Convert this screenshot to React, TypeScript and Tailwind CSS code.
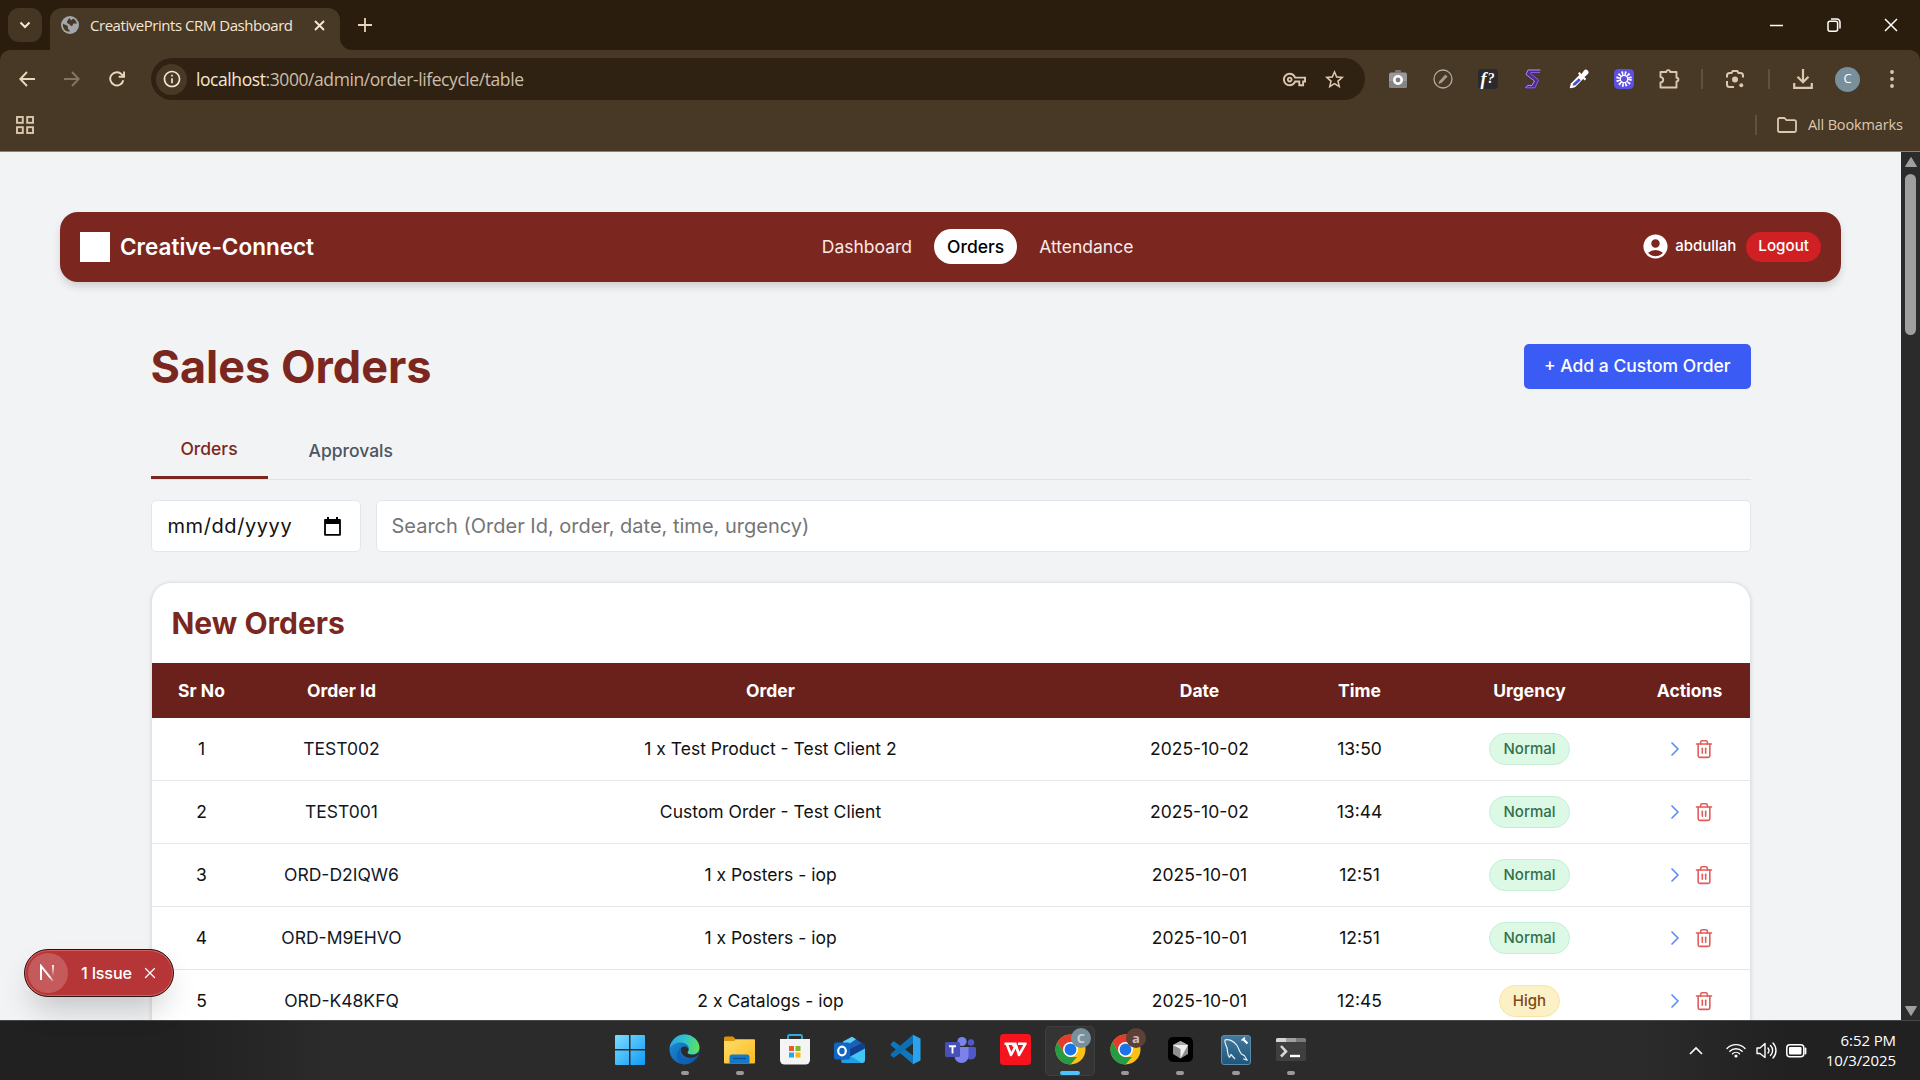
import React from "react";
import { X, Trash2, ChevronRight } from "lucide-react";
import { MdAccountCircle, MdOutlineVpnKey, MdStarOutline, MdOutlineInfo } from "react-icons/md";

type Order = { no: number; id: string; order: string; date: string; time: string; urgency: "Normal" | "High" };

const orders: Order[] = [
  { no: 1, id: "TEST002", order: "1 x Test Product - Test Client 2", date: "2025-10-02", time: "13:50", urgency: "Normal" },
  { no: 2, id: "TEST001", order: "Custom Order - Test Client", date: "2025-10-02", time: "13:44", urgency: "Normal" },
  { no: 3, id: "ORD-D2IQW6", order: "1 x Posters - iop", date: "2025-10-01", time: "12:51", urgency: "Normal" },
  { no: 4, id: "ORD-M9EHVO", order: "1 x Posters - iop", date: "2025-10-01", time: "12:51", urgency: "Normal" },
  { no: 5, id: "ORD-K48KFQ", order: "2 x Catalogs - iop", date: "2025-10-01", time: "12:45", urgency: "High" },
];

const columns = "grid grid-cols-[100px_180px_1fr_180px_140px_200px_120px] items-center text-center";

function Cell({ className, children }: { className: string; children?: React.ReactNode }) {
  return <div className={`flex shrink-0 items-center justify-center ${className}`}>{children}</div>;
}

/* ---------- browser chrome ---------- */

function TabStrip() {
  return (
    <div className="flex h-[50px] bg-[#2b1d0e]">
      <div className="ml-2 mt-2 flex h-[34px] w-[34px] items-center justify-center rounded-[11px] bg-[#453523]">
        <svg width="12" height="8" viewBox="0 0 12 8" fill="none" stroke="#f6e6d2" strokeWidth="2">
          <path d="M1.5 1.5 6 6l4.500-4.500" />
        </svg>
      </div>
      <div className="ml-2 mt-2 flex h-[42px] w-[290px] items-center rounded-t-[12px] bg-[#483826] pb-[8px] pl-[11px]">
        <svg width="18" height="18" viewBox="0 0 18 18">
          <circle cx="9" cy="9" r="9" fill="#a3a7ac" />
          <path d="M2.200 7.500c1.500 1.800 3.200 1 4.300 2.300 1 1.300-.2 2 .6 3.200.6.900 1.700.8 1.700 2.600-3.700.2-6.700-2.600-6.900-6.200 0-.7.100-1.300.3-1.900ZM8 2.200c1.300 0 1 1.600 2.200 1.700 1.200 0 1-1.200 2.200-1.100 1.800.9 3 2.700 3.400 4.700-1.300.5-2.200-.5-3.200.1-1 .700-.3 1.700-1.400 2.200-1.600.7-2-1.200-3.300-1.900C6.600 7.100 5.800 7 6 5.500 6.200 4.300 7.200 4.600 7.400 3.600c.1-.6.100-1 .6-1.400Z" fill="#483826" />
        </svg>
        <span className="ml-[11px] w-[207px] shrink-0 whitespace-nowrap pt-[1px] text-[15px] tracking-[-0.46px] text-[#f6e6d2]">CreativePrints CRM Dashboard</span>
        <svg className="ml-[17px]" width="11" height="11" viewBox="0 0 11 11" stroke="#f6e6d2" strokeWidth="1.900">
          <path d="m1 1 9 9M10 1l-9 9" />
        </svg>
      </div>
      <svg className="mt-[38px]" width="12" height="12" viewBox="0 0 12 12">
        <path d="M0 0a12 12 0 0 0 12 12H0Z" fill="#483826" />
      </svg>
      <svg className="ml-[6px] mt-[18px]" width="14" height="14" viewBox="0 0 14 14" stroke="#e8d5bc" strokeWidth="1.800">
        <path d="M7 0v14M0 7h14" />
      </svg>
      <div className="ml-auto flex h-[50px] items-center pr-[22px]">
        <svg width="13" height="13" viewBox="0 0 13 13" stroke="#fff" strokeWidth="1.500">
          <path d="M0 6.500h13" />
        </svg>
        <svg className="ml-[44px]" width="14" height="14" viewBox="0 0 14 14" fill="none" stroke="#fff" strokeWidth="1.500">
          <rect x="1" y="3.200" width="9.600" height="10" rx="2" />
          <path d="M4 1h5.500A3.600 3.600 0 0 1 13 4.600V10.500" />
        </svg>
        <svg className="ml-[43px]" width="14" height="14" viewBox="0 0 14 14" stroke="#fff" strokeWidth="1.500">
          <path d="m1 1 12 12M13 1 1 13" />
        </svg>
      </div>
    </div>
  );
}

function Extensions() {
  return (
    <>
      <Cell className="w-[45px]">
        <svg width="20" height="20" viewBox="0 0 20 20">
          <path d="M6.500 3.500 7.500 1h5l1 2.500Z" fill="#777" />
          <rect x="1" y="3.500" width="18" height="15.500" rx="2" fill="#999" />
          <path d="M1 12h18v5a2 2 0 0 1-2 2H3a2 2 0 0 1-2-2Z" fill="#858585" />
          <circle cx="10" cy="11" r="5" fill="#fff" />
          <circle cx="10" cy="11" r="2.400" fill="#7d7d7d" />
        </svg>
      </Cell>
      <Cell className="w-[45px]">
        <svg width="20" height="20" viewBox="0 0 20 20" fill="none">
          <circle cx="10" cy="10" r="9" stroke="#b3aa9f" strokeWidth="1.300" />
          <path d="m7 13.500 6.500-7" stroke="#a29a8f" strokeWidth="3" />
          <path d="m5.800 14.500 1.300-1.200" stroke="#b3aa9f" strokeWidth="1.200" />
        </svg>
      </Cell>
      <Cell className="w-[45px]">
        <div className="flex h-5 w-5 items-center justify-center rounded-[4px] bg-[#2a2a2c] font-['Liberation_Serif',serif] text-[18px] font-bold italic leading-none text-white">
          f<span className="ml-[1px] text-[14px]">?</span>
        </div>
      </Cell>
      <Cell className="w-[46px]">
        <svg width="18" height="20" viewBox="0 0 18 20" fill="none">
          <path d="M15.500 2.200H5.500L4.200 4.800 12.500 11 9.500 17.500H2" stroke="#4f2a94" strokeWidth="4.200" />
          <path d="M16.500 1H4L2 5.500 10.500 12 8 16.500H3.500L1.500 19" stroke="#b79af0" strokeWidth=".9" />
          <path d="M16 3.500H7L6.500 4.500 14.500 11 11 18.800H2" stroke="#8f66dd" strokeWidth=".9" />
        </svg>
      </Cell>
      <Cell className="w-[45px]">
        <svg width="20" height="20" viewBox="0 0 20 20">
          <path d="M10.800 5.600 14.700 9.500 6 18.200 1.500 19.200.8 18.500 1.900 14.400Z" fill="#fff" />
          <path d="M9.800 9.200 11.800 11.200 6.500 16.200 3.500 16.800 4.200 14.600Z" fill="#4453c8" />
          <path d="M9 4.500 10.500 3l2 2L15 1.500a2.600 2.600 0 0 1 3.700 3.700L15.500 8l1.700 2-1.500 1.400Z" fill="#fff" />
        </svg>
      </Cell>
      <Cell className="w-[45px]">
        <svg width="20" height="20" viewBox="0 0 20 20">
          <rect width="20" height="20" rx="4.500" fill="#5d50e0" />
          <circle cx="10" cy="10" r="5.500" fill="none" stroke="#fff" strokeWidth="4.500" strokeDasharray="1.500 1.380" />
          <circle cx="10" cy="10" r="3.700" fill="none" stroke="#fff" strokeWidth="1.200" />
        </svg>
      </Cell>
      <Cell className="w-[45px]">
        <svg width="22" height="22" viewBox="0 0 22 22" fill="none" stroke="#dcc8ae" strokeWidth="1.900" strokeLinejoin="round">
          <path d="M2.500 4H8.300a1.900 1.900 0 0 1 3.800 0H18.500V9.700a1.900 1.900 0 0 1 0 3.800V19.500H2.500V14.500a2.700 2.700 0 0 0 0-5.400Z" />
        </svg>
      </Cell>
      <Cell className="w-[21px]"><div className="h-5 w-[2px] bg-[#64513b]" /></Cell>
      <Cell className="w-[46px]">
        <svg width="20" height="20" viewBox="0 0 20 20" fill="none" stroke="#dcc8ae" strokeWidth="2">
          <path d="M2 8.500V6.500A2.500 2.500 0 0 1 4.500 4H6.500l1.200-2h4.600l1.200 2h2A2.500 2.500 0 0 1 18 6.500v2M2 12v3.500A2.500 2.500 0 0 0 4.500 18H9" />
          <circle cx="10" cy="10.500" r="3" fill="#dcc8ae" stroke="none" />
          <circle cx="16.300" cy="16.300" r="2" fill="#dcc8ae" stroke="none" />
        </svg>
      </Cell>
      <Cell className="w-[22px]"><div className="h-5 w-[2px] bg-[#64513b]" /></Cell>
      <Cell className="w-[46px]">
        <svg width="20" height="20" viewBox="0 0 20 20" fill="none" stroke="#dcc8ae" strokeWidth="2.200">
          <path d="M10 0v13M4.500 7.800 10 13.200l5.500-5.400M1.200 14v4.800h17.600V14" />
        </svg>
      </Cell>
      <Cell className="w-[43px]">
        <div className="flex h-[25px] w-[25px] items-center justify-center rounded-full bg-[#78909c] text-[13px] text-white">C</div>
      </Cell>
      <Cell className="w-[46px]">
        <svg width="4" height="18" viewBox="0 0 4 18" fill="#dcc8ae">
          <circle cx="2" cy="2" r="1.900" />
          <circle cx="2" cy="9" r="1.900" />
          <circle cx="2" cy="16" r="1.900" />
        </svg>
      </Cell>
    </>
  );
}

function Toolbar() {
  return (
    <div className="bg-[#2b1d0e]">
      <div className="h-[102px] rounded-t-[10px] border-b border-[#8c8175] bg-[#483826]">
        <div className="flex h-[58px] items-center pr-[4px]">
          <Cell className="ml-[4px] w-[46px]">
            <svg width="16" height="16" viewBox="0 0 16 16" fill="none" stroke="#ead6bb" strokeWidth="1.900"><path d="M16 8H1.500M8 1 1.300 8 8 15" /></svg>
          </Cell>
          <Cell className="w-[44px]">
            <svg width="16" height="16" viewBox="0 0 16 16" fill="none" stroke="#857560" strokeWidth="1.900"><path d="M0 8h14.500M8 1l6.700 7L8 15" /></svg>
          </Cell>
          <Cell className="w-[46px]">
            <svg width="16" height="16" viewBox="0 0 16 16" fill="none" stroke="#ead6bb" strokeWidth="1.900"><path d="M14.300 9.200A6.600 6.600 0 1 1 12.700 3.400L15 5.700M15.100 .5v5.300H9.700" /></svg>
          </Cell>
          <div className="ml-[11px] flex h-[42px] w-[1214px] items-center rounded-full bg-[#2f2213] pl-[5px]">
            <div className="flex h-[31px] w-[31px] items-center justify-center rounded-full bg-[#483826]">
              <MdOutlineInfo size={20} color="#f6e6d2" />
            </div>
            <span className="ml-[9px] whitespace-nowrap text-[17.500px] tracking-[-0.42px] text-[#cdbda9]">
              <span className="text-[#f6e6d2]">localhost</span>:3000/admin/order-lifecycle/table
            </span>
            <MdOutlineVpnKey className="ml-auto" size={23} color="#dcc8ae" />
            <MdStarOutline className="ml-[17px] mr-[19px]" size={23} color="#dcc8ae" />
          </div>
          <div className="w-[10px]" />
          <Extensions />
        </div>
        <div className="flex h-[34px] items-center pr-[18px]">
          <svg className="ml-[16px]" width="18" height="18" viewBox="0 0 18 18" fill="none" stroke="#dcc8ae" strokeWidth="1.900">
            <rect x="1" y="1" width="5.800" height="5.800" />
            <rect x="11.200" y="1" width="5.800" height="5.800" />
            <rect x="1" y="11.200" width="5.800" height="5.800" />
            <rect x="11.200" y="11.200" width="5.800" height="5.800" />
          </svg>
          <div className="ml-auto h-5 w-[2px] bg-[#64513b]" />
          <svg className="ml-[20px]" width="20" height="16" viewBox="0 0 20 16" fill="none" stroke="#dcc8ae" strokeWidth="1.800" strokeLinejoin="round">
            <path d="M1 2.500A1.500 1.500 0 0 1 2.500 1H7.500l2 2.200h8A1.500 1.500 0 0 1 19 4.700v8.800a1.500 1.500 0 0 1-1.500 1.500h-15A1.500 1.500 0 0 1 1 13.500Z" />
          </svg>
          <span className="ml-[11px] w-[94px] whitespace-nowrap text-[14.500px] tracking-[-0.15px] text-[#dcc8ae]">All Bookmarks</span>
        </div>
      </div>
    </div>
  );
}

/* ---------- web page ---------- */

function NavBar() {
  return (
    <nav className="mx-[60px] mt-[59.500px] flex h-[70px] items-center justify-between rounded-[18px] bg-[#7b2720] px-[20px] text-white shadow-[0_5px_8px_-1px_rgba(0,0,0,0.16)]">
      <div className="flex items-center">
        <div className="h-[30px] w-[30px] bg-white" />
        <span className="ml-[10px] text-[22.500px] font-semibold">Creative-Connect</span>
      </div>
      <div className="flex items-center text-[17.500px] text-[#fbe9e7]">
        <span className="pt-[1px]">Dashboard</span>
        <span className="mx-[22px] flex h-[35px] items-center rounded-full bg-white px-[13px] pt-[1px] font-medium text-black">Orders</span>
        <span className="pt-[1px]">Attendance</span>
      </div>
      <div className="flex items-center justify-end">
        <MdAccountCircle size={29} />
        <span className="ml-[5px] text-[15px] font-medium">abdullah</span>
        <span className="ml-[10px] flex h-[30px] items-center rounded-full bg-[#d12023] px-[12px] text-[15.200px] font-medium">Logout</span>
      </div>
    </nav>
  );
}

function Filters() {
  return (
    <div className="mt-[20px] flex gap-[15px] text-[20px]">
      <div className="flex h-[52px] w-[210px] items-center justify-between rounded-[5px] border border-[#e3e6ea] bg-white pl-[16px] pr-[19px]">
        <span className="tracking-[0.58px] text-[#111]">mm/dd/yyyy</span>
        <svg width="17" height="19" viewBox="0 0 17 19">
          <path d="M1 3h15v14.800H1Z" fill="none" stroke="#000" strokeWidth="1.800" strokeLinejoin="round" />
          <path d="M1 2.500h15V7H1ZM3 0h2v3H3ZM12 0h2v3h-2Z" fill="#000" />
        </svg>
      </div>
      <div className="flex h-[52px] flex-1 items-center rounded-[5px] border border-[#e3e6ea] bg-white pl-[15px] text-[#757575]">
        Search (Order Id, order, date, time, urgency)
      </div>
    </div>
  );
}

function OrdersTable() {
  return (
    <div className="mt-[30px] h-[600px] overflow-hidden rounded-t-[20px] border border-[#e0e3e8] bg-white shadow-[0_1px_4px_rgba(0,0,0,0.12)]">
      <h2 className="flex h-[80px] items-center pl-[20px] text-[30px] font-bold text-[#7b2720]">New Orders</h2>
      <div className={`${columns} h-[55px] bg-[#6b211b] pt-[2px] text-[17.500px] font-bold text-white`}>
        <span>Sr No</span>
        <span>Order Id</span>
        <span>Order</span>
        <span>Date</span>
        <span>Time</span>
        <span>Urgency</span>
        <span>Actions</span>
      </div>
      {orders.map((o) => (
        <div key={o.no} className={`${columns} h-[63px] border-b border-[#e5e7eb] text-[17.500px] text-[#111]`}>
          <span className="pt-[1px]">{o.no}</span>
          <span className="pt-[1px] text-[#101828]">{o.id}</span>
          <span className="pt-[1px]">{o.order}</span>
          <span className="pt-[1px]">{o.date}</span>
          <span className="pt-[1px]">{o.time}</span>
          <span className="flex justify-center">
            <span
              className={`flex h-[32px] items-center rounded-full border px-[13px] text-[15px] font-medium ${
                o.urgency === "Normal" ? "border-[#c6efd6] bg-[#dcf9e6] text-[#33704b]" : "border-[#f8e5a6] bg-[#fcf1c6] text-[#7f4a17]"
              }`}
            >
              {o.urgency}
            </span>
          </span>
          <span className="flex items-center justify-center pr-[3px]">
            <ChevronRight size={24} strokeWidth={1.700} color="#5f8df5" />
            <Trash2 className="ml-[7px]" size={20} strokeWidth={1.900} color="#e25b5b" />
          </span>
        </div>
      ))}
    </div>
  );
}

function IssueBadge() {
  return (
    <div className="absolute left-[24px] top-[949px] flex h-[48px] w-[150px] items-center rounded-full border border-[#2c1210] bg-[#b63637] pl-[3px] text-white shadow-[inset_0_0_0_1px_#d2605f,0_16px_32px_-8px_rgba(0,0,0,0.24)]">
      <div className="flex h-[40px] w-[40px] items-center justify-center rounded-full bg-[#c45a5b] pr-[1px]">
        <svg width="17" height="18" viewBox="0 0 17 18" fill="none">
          <defs>
            <linearGradient id="nStem" x1="0" y1="0" x2="0" y2="1">
              <stop offset="0" stopColor="#fff" />
              <stop offset="1" stopColor="#fff" stopOpacity="0" />
            </linearGradient>
            <linearGradient id="nDiag" x1="0" y1="0" x2="1" y2="1">
              <stop offset=".7" stopColor="#fff" />
              <stop offset="1" stopColor="#fff" stopOpacity=".2" />
            </linearGradient>
          </defs>
          <path d="M2 16V2L14 17" stroke="url(#nDiag)" strokeWidth="2" />
          <rect x="13" y="1" width="1.900" height="11" fill="url(#nStem)" />
        </svg>
      </div>
      <span className="ml-[13px] text-[16.200px] font-medium tracking-[-0.2px]">1 Issue</span>
      <X className="ml-[9px]" size={18} strokeWidth={1.700} />
    </div>
  );
}

function Scrollbar() {
  return (
    <div className="flex w-[19px] shrink-0 flex-col items-center bg-[#2b2b2b]">
      <svg className="mt-[5px]" width="12" height="10" viewBox="0 0 12 10"><path d="M6 .5 11.500 9.500H.5Z" fill="#9f9f9f" stroke="#9f9f9f" strokeLinejoin="round" /></svg>
      <div className="mt-[7px] h-[161px] w-[11px] rounded-full bg-[#9f9f9f]" />
      <svg className="mb-[4px] mt-auto" width="12" height="10" viewBox="0 0 12 10"><path d="M6 9.500 11.500.5H.5Z" fill="#9f9f9f" stroke="#9f9f9f" strokeLinejoin="round" /></svg>
    </div>
  );
}

/* ---------- taskbar ---------- */

function WindowsIcon() {
  return (
    <svg width="30" height="30" viewBox="0 0 30 30">
      <defs>
        <linearGradient id="win" x1="0" y1="0" x2="1" y2="1" gradientUnits="objectBoundingBox">
          <stop offset="0" stopColor="#7fdcff" />
          <stop offset="1" stopColor="#0f9bf5" />
        </linearGradient>
      </defs>
      <path d="M1 0H14V14H0V1A1 1 0 0 1 1 0ZM15.500 0H29a1 1 0 0 1 1 1V14H15.500ZM0 15.500H14V30H1a1 1 0 0 1-1-1ZM15.500 15.500H30V29a1 1 0 0 1-1 1H15.500Z" fill="url(#win)" />
    </svg>
  );
}

function EdgeIcon() {
  return (
    <svg width="31" height="31" viewBox="0 0 31 31">
      <defs>
        <linearGradient id="edgeTop" x1="0" y1=".3" x2="1" y2=".5">
          <stop offset="0" stopColor="#2aa5e0" />
          <stop offset=".5" stopColor="#2fc7c9" />
          <stop offset="1" stopColor="#5fe05a" />
        </linearGradient>
        <linearGradient id="edgeBody" x1="0" y1="0" x2="1" y2="1">
          <stop offset="0" stopColor="#1f94dd" />
          <stop offset="1" stopColor="#0c4da0" />
        </linearGradient>
      </defs>
      <circle cx="15.500" cy="15.500" r="15" fill="url(#edgeBody)" />
      <path d="M.7 14C2 6 8 .5 15.500.5 24 .5 30.500 7 30.500 13.500c0 4.500-3.500 7-7.500 7-3.500 0-5-1.200-4.500-2.300.5-1 1.300-1.600 1.300-3.700 0-3.500-4-6-8.300-6C6.500 8.500 2.500 11 .7 14Z" fill="url(#edgeTop)" />
      <path d="M11.500 14.500c-2 6 3 13.500 12 13a15 15 0 0 1-10 2.800C7 28 6.500 17.500 11.500 14.500Z" fill="#0f62b5" />
      <path d="M12 14.300c1-1.400 3-2.300 5-1.500 1.900.8 2.600 2 2.500 3.300-.1 1-1 1.600-1.100 2.400 0 1.200 1.600 2.300 4.600 2.300 2.300 0 4.200-.6 7.500-2.300-1.300 3.700-6 5.500-10 5.200-5.200-.3-9.700-4.200-8.500-9.400Z" fill="#2b2b2b" />
    </svg>
  );
}

function ExplorerIcon() {
  return (
    <svg width="31" height="28" viewBox="0 0 31 28">
      <defs>
        <linearGradient id="folder" x1="0" y1="0" x2="1" y2="1">
          <stop offset="0" stopColor="#ffdc6b" />
          <stop offset="1" stopColor="#fbbc1e" />
        </linearGradient>
      </defs>
      <path d="M0 2a1.500 1.500 0 0 1 1.500-1.500H9L12 3.500V8H0Z" fill="#d9940c" />
      <path d="M0 5h10l2-1.800h18a1 1 0 0 1 1 1V26.500a1 1 0 0 1-1 1H1a1 1 0 0 1-1-1Z" fill="url(#folder)" />
      <path d="M5.500 27.500V21a2.500 2.500 0 0 1 2.500-2.500h15A2.500 2.500 0 0 1 25.500 21v6.500Z" fill="#1379cb" />
      <path d="M9 22.500h13" stroke="#0b4f8e" strokeWidth="1.300" />
    </svg>
  );
}

function StoreIcon() {
  return (
    <svg width="30" height="31" viewBox="0 0 30 31">
      <path d="M8 6V2.500A1.500 1.500 0 0 1 9.500 1h11A1.500 1.500 0 0 1 22 2.500V6" fill="none" stroke="#30a9dc" strokeWidth="1.900" />
      <path d="M0 5h30v21a4.500 4.500 0 0 1-4.500 4.500h-21A4.500 4.500 0 0 1 0 26Z" fill="#f4f4f5" />
      <path d="M9 12h5v5H9Z" fill="#f05a29" />
      <path d="M15.500 12h5v5h-5Z" fill="#7eba27" />
      <path d="M9 18.500h5v5H9Z" fill="#26a8e8" />
      <path d="M15.500 18.500h5v5h-5Z" fill="#fcb713" />
    </svg>
  );
}

function OutlookIcon() {
  return (
    <svg width="32" height="28" viewBox="0 0 32 28">
      <path d="M6 9 18 .8 31 9v5H6Z" fill="#1a5fb8" />
      <path d="M9 5.500 18 .8l4 2.500L9 12Z" fill="#5fd0f5" />
      <path d="M14 14 28 7l3 2v5L16 22Z" fill="#123f8f" />
      <path d="M7 25.500 31 12.500V24a3 3 0 0 1-3 3H9Z" fill="#41c8f2" />
      <path d="M7 14 28 27H10a3 3 0 0 1-3-3Z" fill="#1e93e0" opacity=".8" />
      <rect x="0" y="6.500" width="16" height="17" rx="2" fill="#1066c4" />
      <ellipse cx="8" cy="15" rx="3.800" ry="4.300" fill="none" stroke="#fff" strokeWidth="2.200" />
    </svg>
  );
}

function VsCodeIcon() {
  return (
    <svg width="31" height="31" viewBox="0 0 31 31">
      <path d="M23 30 .8 11.200V9.800L3 7.600H4.300L23 21.500Z" fill="#1177bd" />
      <path d="M23 .8.800 19.800v1.400L3 23.400h1.300L23 9.500Z" fill="#0f6fb4" />
      <path d="M22.500.5 30.500 4.500V26.500L22.500 30.500C23 30 23 29.500 23 29V2C23 1.500 23 1 22.500.5Z" fill="#2aa3ee" />
    </svg>
  );
}

function TeamsIcon() {
  return (
    <svg width="31" height="28" viewBox="0 0 31 28">
      <circle cx="17" cy="5.500" r="4.600" fill="#7b83eb" />
      <circle cx="26" cy="6.500" r="3.200" fill="#5059c9" />
      <path d="M20 11h9.500a1.500 1.500 0 0 1 1.500 1.500V18a5 5 0 0 1-10 1Z" fill="#5059c9" />
      <path d="M9.500 11h14V20a7 7 0 0 1-14 0Z" fill="#7b83eb" />
      <rect x="0" y="6" width="15" height="15" rx="1.500" fill="#4650b8" />
      <path d="M4 10.300h7M7.500 10v7.500" stroke="#fff" strokeWidth="1.900" />
    </svg>
  );
}

function WpsIcon() {
  return (
    <svg width="31" height="31" viewBox="0 0 31 31">
      <rect width="31" height="31" rx="3.500" fill="#f5141d" />
      <path d="M4.500 9.700H15.500L12.500 12.300M7 10.500 11 21 16 11.500 19 21 25.500 9.700H18" fill="none" stroke="#fff" strokeWidth="2.600" strokeLinejoin="round" />
    </svg>
  );
}

function ChromeIcon({ letter, badge }: { letter: string; badge: string }) {
  return (
    <div className="relative h-[31px] w-[31px]">
      <svg width="31" height="31" viewBox="0 0 31 31">
        <circle cx="15.500" cy="15.500" r="15" fill="#fbc116" />
        <path d="M15.500.5a15 15 0 0 1 13 7.500H15.500L9 19.200 2.500 8A15 15 0 0 1 15.500.5Z" fill="#e33b2e" />
        <path d="M2.500 8 9 19.250 L15.500 23 H22 L15.500 30.500A15 15 0 0 1 2.500 8Z" fill="#259b45" />
        <circle cx="15.500" cy="15.500" r="7.500" fill="#fff" />
        <circle cx="15.500" cy="15.500" r="5.900" fill="#1a73e8" />
      </svg>
      <div className={`absolute -top-[6px] left-[16px] flex h-[20px] w-[20px] items-center justify-center rounded-full text-[13px] font-bold leading-none ${badge}`}>{letter}</div>
    </div>
  );
}

function CursorIcon() {
  return (
    <svg width="25" height="25" viewBox="0 0 25 25">
      <rect width="25" height="25" rx="5" fill="#000" />
      <path d="M12.500 4 20 8v9l-7.500 4.500L5 17V8Z" fill="#8e8e8e" />
      <path d="M12.500 4 20 8l-7.500 4L5 8Z" fill="#a8a8a8" />
      <path d="M5 8h15l-7.500 13.500V12Z" fill="#efefef" />
    </svg>
  );
}

function MySqlIcon() {
  return (
    <svg width="30" height="30" viewBox="0 0 30 30">
      <defs>
        <linearGradient id="mysql" x1="0" y1="0" x2="0" y2="1">
          <stop offset="0" stopColor="#437a9e" />
          <stop offset="1" stopColor="#1e567d" />
        </linearGradient>
      </defs>
      <rect x=".5" y=".5" width="29" height="29" rx="2.500" fill="url(#mysql)" stroke="#5b8bab" />
      <path d="M8.500 22.500C6 19.500 7 16.500 6 13 5 10 3 7 4.200 4.800 8 3.800 13 6 16 10.500c2 3 2 6 4.500 8.500l3 1.800 2.700 4.400-4-1.500M8.500 22.500l1.500-3 4 4.500" fill="none" stroke="#e5f0f7" strokeWidth="1.200" strokeLinejoin="round" />
      <path d="m22 4 4.500 4.500" stroke="#fff" strokeWidth="2.200" />
      <path d="M20.500 5.500 24 2.500" stroke="#fff" strokeWidth="1.600" />
    </svg>
  );
}

function TerminalIcon() {
  return (
    <svg width="30" height="23" viewBox="0 0 30 23">
      <rect width="30" height="23" rx="1.500" fill="#3f3f3f" />
      <path d="M0 1.500A1.500 1.500 0 0 1 1.500 0H10V4H0Z" fill="#d4d4d4" />
      <path d="M10 0H20V4H10Z" fill="#a0a0a0" />
      <path d="M20 0h8.500A1.500 1.500 0 0 1 30 1.500V4H20Z" fill="#7a7a7a" />
      <path d="m5 8 5 5.500L5 18.500" fill="none" stroke="#d8d8d8" strokeWidth="2.600" />
      <path d="M14 18h10" stroke="#fff" strokeWidth="2.400" />
    </svg>
  );
}

type App = { key: string; icon: React.ReactNode; state?: "running" | "active" };

const apps: App[] = [
  { key: "start", icon: <WindowsIcon /> },
  { key: "edge", icon: <EdgeIcon />, state: "running" },
  { key: "explorer", icon: <ExplorerIcon />, state: "running" },
  { key: "store", icon: <StoreIcon /> },
  { key: "outlook", icon: <OutlookIcon /> },
  { key: "code", icon: <VsCodeIcon /> },
  { key: "teams", icon: <TeamsIcon /> },
  { key: "wps", icon: <WpsIcon /> },
  { key: "chrome-c", icon: <ChromeIcon letter="C" badge="bg-[#78909c] text-[#c3d2da]" />, state: "active" },
  { key: "chrome-a", icon: <ChromeIcon letter="a" badge="bg-[#5d4037] text-[#cbbdb8]" />, state: "running" },
  { key: "cursor", icon: <CursorIcon />, state: "running" },
  { key: "mysql", icon: <MySqlIcon />, state: "running" },
  { key: "terminal", icon: <TerminalIcon />, state: "running" },
];

function Taskbar() {
  return (
    <div className="grid h-[60px] grid-cols-[602px_717px_1fr] border-t border-[#484848] bg-[linear-gradient(90deg,#212121_0,#212121_180px,#2b2b2b_330px,#2b2b2b_1640px,#212121_1790px)]">
      <div />
      <div className="flex items-center">
        {apps.map((a) => (
          <div key={a.key} className="flex w-[55.100px] justify-center">
            <div className={`flex h-[50px] w-[50px] flex-col items-center rounded-[5px] ${a.state === "active" ? "bg-[#343434] shadow-[inset_0_0_0_1px_#3e3e3e]" : ""}`}>
              <div className="flex h-[45px] items-center pt-[3px]">{a.icon}</div>
              {a.state === "running" && <div className="h-[4px] w-[8px] rounded-full bg-[#9a9a9a]" />}
              {a.state === "active" && <div className="h-[4px] w-[20px] rounded-full bg-[#4cc2ff]" />}
            </div>
          </div>
        ))}
      </div>
      <div className="flex items-center justify-end pr-[24px] text-white">
        <svg width="14" height="9" viewBox="0 0 14 9" fill="none" stroke="#fff" strokeWidth="1.600"><path d="m1 8 6-6 6 6" /></svg>
        <svg className="ml-[23px]" width="20" height="15" viewBox="0 0 20 15" fill="none" stroke="#fff" strokeWidth="1.400" strokeLinecap="round">
          <path d="M1 5.500a12.500 12.500 0 0 1 18 0M3.800 8.300a8.700 8.700 0 0 1 12.400 0M6.500 10.800a5 5 0 0 1 7 0" />
          <circle cx="10" cy="13" r="1.600" fill="#fff" stroke="none" />
        </svg>
        <svg className="ml-[10px]" width="21" height="17" viewBox="0 0 21 17" fill="none" stroke="#fff" strokeWidth="1.400" strokeLinejoin="round" strokeLinecap="round">
          <path d="M1 6h3L9 1.500v14L4 11.500H1ZM12 6a4 4 0 0 1 0 5M14.500 3.500a7 7 0 0 1 0 10M17 1a11 11 0 0 1 0 15" />
        </svg>
        <svg className="ml-[9px]" width="21" height="14" viewBox="0 0 21 14" fill="none">
          <rect x=".8" y=".8" width="17" height="12" rx="3" stroke="#fff" strokeWidth="1.500" />
          <rect x="3" y="3" width="12.500" height="7.600" rx="1" fill="#fff" />
          <path d="M19.500 4.500v5" stroke="#fff" strokeWidth="1.800" strokeLinecap="round" />
        </svg>
        <div className="ml-[10px] flex w-[79px] flex-col items-end whitespace-nowrap pb-[2px] text-right text-[15px] leading-[20px] tracking-[-0.1px]">
          <span>6:52 PM</span>
          <span>10/3/2025</span>
        </div>
      </div>
    </div>
  );
}

export default function App() {
  return (
    <div className="relative flex h-[1080px] w-[1920px] flex-col overflow-hidden font-['Open_Sans','Noto_Sans',sans-serif]">
      <TabStrip />
      <Toolbar />
      <div className="flex h-[868px]">
        <main className="flex-1 overflow-hidden bg-[#f2f3f5] font-['Inter',sans-serif]">
          <NavBar />
          <div className="ml-[150.500px] mr-[150.500px]">
            <div className="mt-[61.500px] flex h-[46px] items-center justify-between">
              <h1 className="text-[45px] font-bold leading-none text-[#7b2720]">Sales Orders</h1>
              <button className="flex h-[45px] items-center rounded-[5px] bg-[#3a5cf5] px-[20px] pt-[1px] text-[17.500px] font-medium text-white">+ Add a Custom Order</button>
            </div>
            <div className="mt-[30px] flex h-[61px] border-b border-[#dfe2e6] text-[17.500px] font-medium">
              <div className="flex h-[60px] w-[117px] items-center justify-center border-b-[3px] border-[#7b2720] pt-[4px] text-[#7b2720]">Orders</div>
              <div className="flex h-[63px] items-center pl-[41px] pt-[1px] text-[#4b5563]">Approvals</div>
            </div>
            <Filters />
            <OrdersTable />
          </div>
        </main>
        <Scrollbar />
      </div>
      <Taskbar />
      <div className="font-['Inter',sans-serif]">
        <IssueBadge />
      </div>
    </div>
  );
}
